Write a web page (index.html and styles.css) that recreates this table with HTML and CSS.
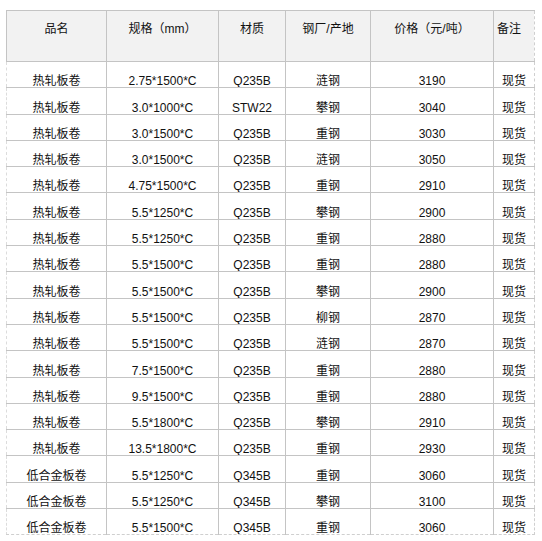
FILE: index.html
```html
<!DOCTYPE html>
<html lang="zh">
<head>
<meta charset="utf-8">
<link rel="stylesheet" href="styles.css">
</head>
<body>
<table class="price-table">
  <colgroup>
    <col class="c1"><col class="c2"><col class="c3"><col class="c4"><col class="c5"><col class="c6">
  </colgroup>
  <thead>
    <tr class="head"><th>品名</th><th>规格（mm）</th><th>材质</th><th>钢厂/产地</th><th>价格（元/吨）</th><th class="note">备注</th></tr>
  </thead>
  <tbody>
    <tr><td>热轧板卷</td><td>2.75*1500*C</td><td>Q235B</td><td>涟钢</td><td>3190</td><td>现货</td></tr>
    <tr><td>热轧板卷</td><td>3.0*1000*C</td><td>STW22</td><td>攀钢</td><td>3040</td><td>现货</td></tr>
    <tr><td>热轧板卷</td><td>3.0*1500*C</td><td>Q235B</td><td>重钢</td><td>3030</td><td>现货</td></tr>
    <tr><td>热轧板卷</td><td>3.0*1500*C</td><td>Q235B</td><td>涟钢</td><td>3050</td><td>现货</td></tr>
    <tr><td>热轧板卷</td><td>4.75*1500*C</td><td>Q235B</td><td>重钢</td><td>2910</td><td>现货</td></tr>
    <tr><td>热轧板卷</td><td>5.5*1250*C</td><td>Q235B</td><td>攀钢</td><td>2900</td><td>现货</td></tr>
    <tr><td>热轧板卷</td><td>5.5*1250*C</td><td>Q235B</td><td>重钢</td><td>2880</td><td>现货</td></tr>
    <tr><td>热轧板卷</td><td>5.5*1500*C</td><td>Q235B</td><td>重钢</td><td>2880</td><td>现货</td></tr>
    <tr><td>热轧板卷</td><td>5.5*1500*C</td><td>Q235B</td><td>攀钢</td><td>2900</td><td>现货</td></tr>
    <tr><td>热轧板卷</td><td>5.5*1500*C</td><td>Q235B</td><td>柳钢</td><td>2870</td><td>现货</td></tr>
    <tr><td>热轧板卷</td><td>5.5*1500*C</td><td>Q235B</td><td>涟钢</td><td>2870</td><td>现货</td></tr>
    <tr><td>热轧板卷</td><td>7.5*1500*C</td><td>Q235B</td><td>重钢</td><td>2880</td><td>现货</td></tr>
    <tr><td>热轧板卷</td><td>9.5*1500*C</td><td>Q235B</td><td>重钢</td><td>2880</td><td>现货</td></tr>
    <tr><td>热轧板卷</td><td>5.5*1800*C</td><td>Q235B</td><td>攀钢</td><td>2910</td><td>现货</td></tr>
    <tr><td>热轧板卷</td><td>13.5*1800*C</td><td>Q235B</td><td>重钢</td><td>2930</td><td>现货</td></tr>
    <tr><td>低合金板卷</td><td>5.5*1250*C</td><td>Q345B</td><td>重钢</td><td>3060</td><td>现货</td></tr>
    <tr><td>低合金板卷</td><td>5.5*1250*C</td><td>Q345B</td><td>攀钢</td><td>3100</td><td>现货</td></tr>
    <tr><td>低合金板卷</td><td>5.5*1500*C</td><td>Q345B</td><td>重钢</td><td>3060</td><td>现货</td></tr>
  </tbody>
</table>
</body>
</html>
```
FILE: styles.css
```css
html, body {
  margin: 0;
  padding: 0;
  background: #ffffff;
}
body {
  padding: 10px 0 0 6px;
  font-family: "Liberation Sans", "Noto Sans CJK SC", sans-serif;
  font-size: 12px;
  color: #111111;
}
.price-table {
  border-collapse: collapse;
  table-layout: fixed;
  width: 528px;
}
.c1 { width: 100px; }
.c2 { width: 112px; }
.c3 { width: 67px; }
.c4 { width: 85px; }
.c5 { width: 123px; }
.c6 { width: 41px; }
.price-table th,
.price-table td {
  border: 1px solid #c4c4c4;
  text-align: center;
  padding: 0;
  white-space: nowrap;
  overflow: hidden;
}
.price-table th {
  background: #f2f2f2;
  font-weight: normal;
  height: 51px;
  vertical-align: top;
  padding-top: 10px;
  line-height: 16px;
  box-sizing: border-box;
}
.price-table th.note {
  text-align: left;
  padding-left: 3px;
}
.price-table td {
  height: 26.3px;
  vertical-align: bottom;
  padding-bottom: 0;
  line-height: 12px;
  box-sizing: border-box;
}
.price-table tr > :last-child {
  border-right: 1px dashed #cfcfcf;
}
.price-table tbody td:first-child {
  border-left: 1px dashed #dcdcdc;
}
.price-table tbody tr:last-child td {
  border-bottom: 1px dashed #cfcfcf;
}
```
